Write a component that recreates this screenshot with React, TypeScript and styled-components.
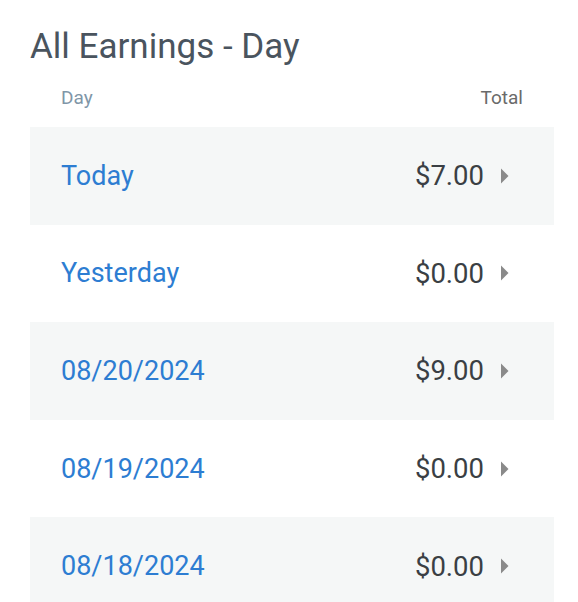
import { createGlobalStyle } from 'styled-components'
import styled from 'styled-components'

const GlobalStyle = createGlobalStyle`
  body {
    margin: 0;
    background: #ffffff;
    font-family: Roboto, "Liberation Sans", Arial, sans-serif;
  }
`

const Wrapper = styled.div`
  width: 524px;
  padding: 26px 0 0 30px;
`

const Title = styled.h1`
  margin: 0;
  font-size: 35px;
  line-height: 42px;
  font-weight: 400;
  color: #4a545e;
`

const HeaderRow = styled.div`
  display: flex;
  justify-content: space-between;
  align-items: center;
  height: 59px;
  padding: 0 31px 0 31px;
  box-sizing: border-box;
  font-size: 19px;
`

const HeaderCell = styled.span<{ $muted?: boolean }>`
  color: ${({ $muted }) => ($muted ? '#8096a8' : '#6a6a6a')};
`

const List = styled.div`
  display: flex;
  flex-direction: column;
`

const Row = styled.div<{ $shaded: boolean }>`
  display: flex;
  align-items: center;
  justify-content: space-between;
  height: 97.6px;
  padding: 0 32px 0 31px;
  background: ${({ $shaded }) => ($shaded ? '#f5f7f7' : '#ffffff')};
  cursor: pointer;
`

const DayLink = styled.a`
  font-size: 27px;
  color: #2d7dd2;
  text-decoration: none;
`

const Amount = styled.div`
  display: flex;
  align-items: center;
  gap: 2px;
  font-size: 27.5px;
  color: #3a3f44;
`

const Arrow = () => (
  <svg width="36" height="36" viewBox="0 0 24 24" fill="#8a8a8a">
    <path d="M10 17l5-5-5-5v10z" />
  </svg>
)

const rows = [
  { day: 'Today', total: '$7.00' },
  { day: 'Yesterday', total: '$0.00' },
  { day: '08/20/2024', total: '$9.00' },
  { day: '08/19/2024', total: '$0.00' },
  { day: '08/18/2024', total: '$0.00' },
]

export default function App() {
  return (
    <Wrapper>
      <GlobalStyle />
      <Title>All Earnings - Day</Title>
      <HeaderRow>
        <HeaderCell $muted>Day</HeaderCell>
        <HeaderCell>Total</HeaderCell>
      </HeaderRow>
      <List>
        {rows.map((r, i) => (
          <Row key={r.day} $shaded={i % 2 === 0}>
            <DayLink>{r.day}</DayLink>
            <Amount>
              {r.total}
              <Arrow />
            </Amount>
          </Row>
        ))}
      </List>
    </Wrapper>
  )
}
